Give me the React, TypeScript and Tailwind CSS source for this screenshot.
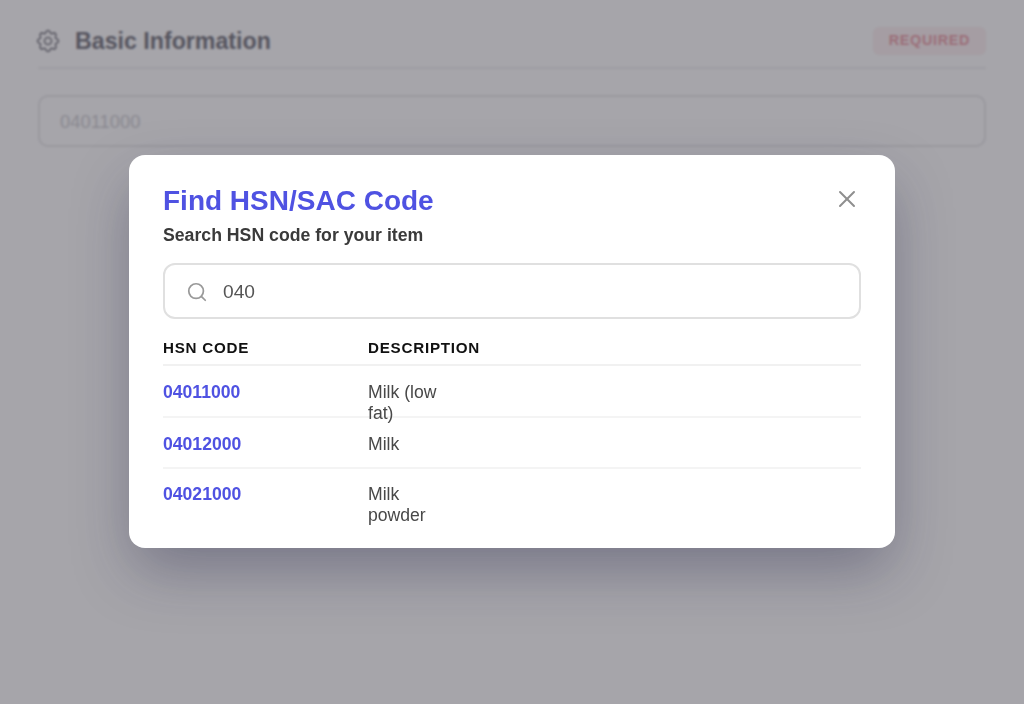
import { Search, X } from "lucide-react";

const rows = [
  { code: "04011000", lines: ["Milk (low", "fat)"], h: "h-[52px]", pt: "pt-[16px]" },
  { code: "04012000", lines: ["Milk"], h: "h-[51px]", pt: "pt-[16px]" },
  { code: "04021000", lines: ["Milk", "powder"], h: "h-[62px]", pt: "pt-[15px]" },
];

function Cog() {
  return (
    <svg viewBox="0 0 24 24" fill="none" stroke="currentColor" strokeWidth={1.35} className="-ml-[4px] h-[28px] w-[28px] text-[#85858d]">
      <path
        strokeLinecap="round"
        strokeLinejoin="round"
        d="M10.325 4.317c.426-1.756 2.924-1.756 3.35 0a1.724 1.724 0 002.573 1.066c1.543-.94 3.31.826 2.37 2.37a1.724 1.724 0 001.065 2.572c1.756.426 1.756 2.924 0 3.35a1.724 1.724 0 00-1.066 2.573c.94 1.543-.826 3.31-2.37 2.37a1.724 1.724 0 00-2.572 1.065c-.426 1.756-2.924 1.756-3.35 0a1.724 1.724 0 00-2.573-1.066c-1.543.94-3.31-.826-2.37-2.37a1.724 1.724 0 00-1.065-2.572c-1.756-.426-1.756-2.924 0-3.35a1.724 1.724 0 001.066-2.573c-.94-1.543.826-3.31 2.37-2.37.996.608 2.296.07 2.572-1.065z"
      />
      <path strokeLinecap="round" strokeLinejoin="round" d="M15 12a3 3 0 11-6 0 3 3 0 016 0z" />
    </svg>
  );
}

export default function App() {
  return (
    <div className="relative h-[704px] w-[1024px] overflow-hidden bg-white font-['Liberation_Sans',Arial,sans-serif]">
      <div className="px-[38px] pt-[24px]">
        <div className="flex h-[45px] items-start justify-between border-b-2 border-[#f2f2f3]">
          <div className="flex h-[34px] items-center gap-[13px]">
            <Cog />
            <h2 className="text-[23.2px] font-bold leading-[32px] text-[#7b7b84]">Basic Information</h2>
          </div>
          <span className="mt-[3px] flex h-[28px] items-center rounded-[6px] bg-[#fdf2f3] px-[16px] text-[14.4px] font-bold tracking-[0.65px] text-[#eda4ad]">
            REQUIRED
          </span>
        </div>
        <div className="mt-[26px] flex h-[52px] items-center rounded-[10px] border-2 border-[#eaeaec] px-[20px] pt-[1px] text-[18.4px] text-[#d2d2d6]">
          04011000
        </div>
      </div>

      <div className="absolute inset-0 flex items-start justify-center bg-[rgba(32,30,43,0.4)] pt-[155px] backdrop-blur-[1px]">
        <div className="relative h-[393px] w-[766px] rounded-[16px] bg-white px-[34px] pt-[28px] shadow-[0_25px_60px_-5px_rgba(30,30,70,0.36)]">
          <button className="absolute right-[34px] top-[30px] text-[#8f8f8f]">
            <X className="h-[28px] w-[28px]" strokeWidth={1.7} />
          </button>
          <h1 className="text-[28px] font-bold leading-[36px] text-[#4f52e2]">Find HSN/SAC Code</h1>
          <p className="mt-[5px] text-[17.68px] font-bold leading-[22px] text-[#3a3a3a]">Search HSN code for your item</p>
          <div className="mt-[17px] flex h-[56px] items-center rounded-[12px] border-2 border-[#e0e0e0] pl-[21px] pt-[2px]">
            <Search className="h-[22px] w-[22px] text-[#999999]" strokeWidth={1.9} />
            <span className="ml-[15px] text-[19.2px] text-[#555555]">040</span>
          </div>
          <div className="mt-[18px] grid h-[29px] grid-cols-[205px_1fr] border-b-2 border-[#f1f1f1] text-[15.2px] font-bold leading-[22px] tracking-[0.75px] text-[#111111]">
            <div>HSN CODE</div>
            <div>DESCRIPTION</div>
          </div>
          {rows.map((r, i) => (
            <div
              key={r.code}
              className={`grid grid-cols-[205px_1fr] ${r.h} ${r.pt} ${i < 2 ? "border-b-2 border-[#f4f4f4]" : ""}`}
            >
              <div className="text-[17.6px] font-bold leading-[21px] text-[#4f52e2]">{r.code}</div>
              <div className="text-[17.6px] leading-[21px] text-[#484848]">
                {r.lines.map((l) => (
                  <div key={l}>{l}</div>
                ))}
              </div>
            </div>
          ))}
        </div>
      </div>
    </div>
  );
}
